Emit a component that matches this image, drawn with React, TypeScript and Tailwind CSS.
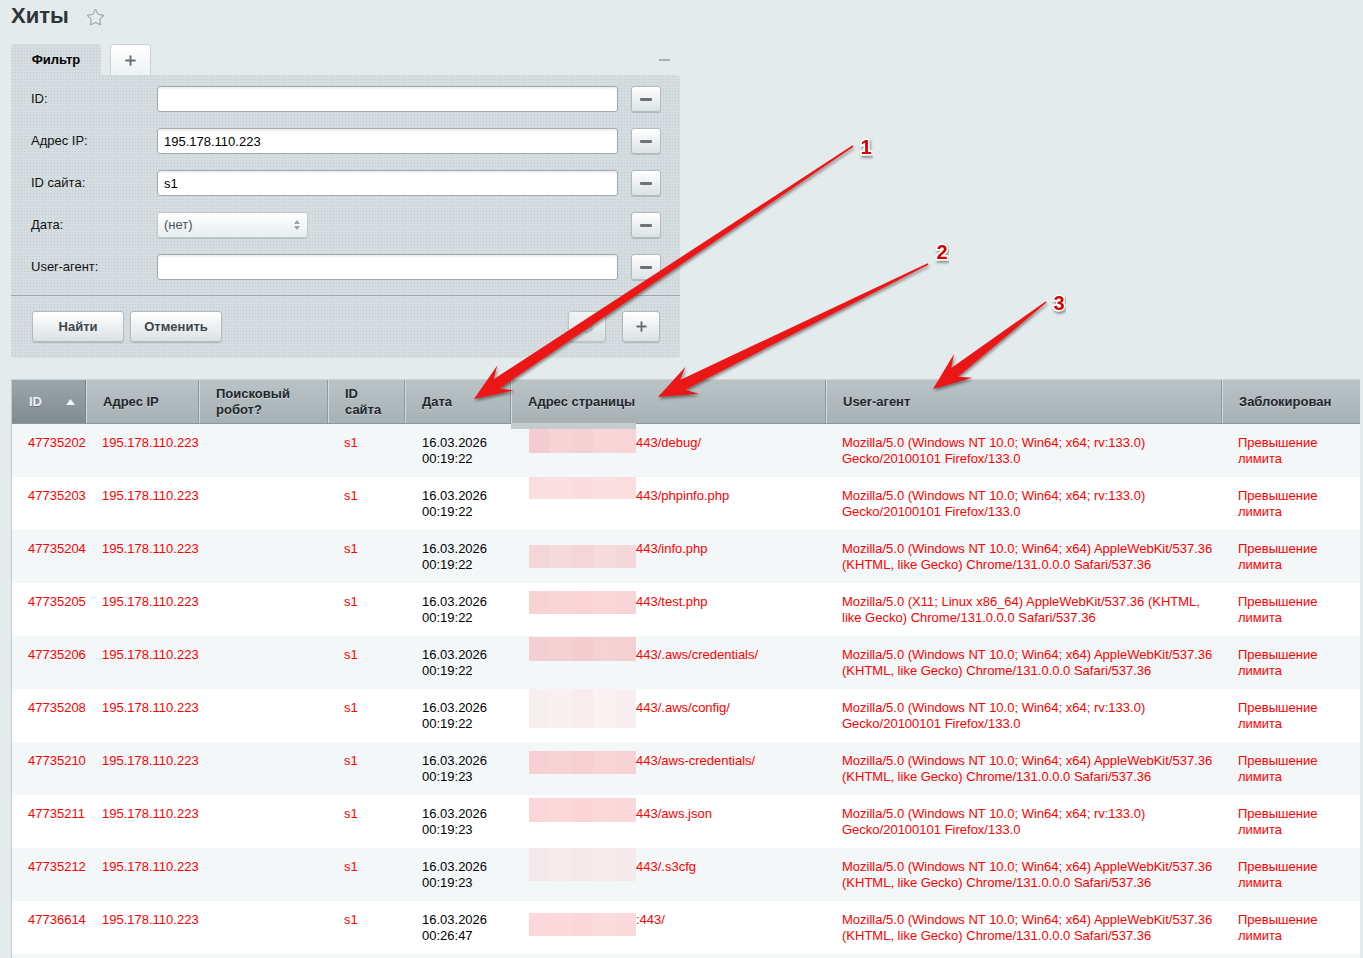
import React from 'react';
import { Star, Plus, Settings } from 'lucide-react';

const UA_FF = ['Mozilla/5.0 (Windows NT 10.0; Win64; x64; rv:133.0)', 'Gecko/20100101 Firefox/133.0'];
const UA_CHROME = ['Mozilla/5.0 (Windows NT 10.0; Win64; x64) AppleWebKit/537.36', '(KHTML, like Gecko) Chrome/131.0.0.0 Safari/537.36'];
const UA_X11 = ['Mozilla/5.0 (X11; Linux x86_64) AppleWebKit/537.36 (KHTML,', 'like Gecko) Chrome/131.0.0.0 Safari/537.36'];

interface Hit {
  id: string;
  page: string;
  agent: string[];
  time: string;
  // redaction block over the host part of the url
  maskTop: number;
  maskH: number;
  shades: string[];
}

const hits: Hit[] = [
  { id: '47735202', page: '443/debug/', agent: UA_FF, time: '00:19:22', maskTop: 5, maskH: 24, shades: ['#f5cdd0', '#f7d3d5', '#f6d1d3', '#f8d6d8', '#f7d4d6'] },
  { id: '47735203', page: '443/phpinfo.php', agent: UA_FF, time: '00:19:22', maskTop: 0, maskH: 22, shades: ['#fbdfe0', '#fcdfe1', '#fbdcde', '#fcdfe0', '#fcdedf'] },
  { id: '47735204', page: '443/info.php', agent: UA_CHROME, time: '00:19:22', maskTop: 15, maskH: 23, shades: ['#f5d6d8', '#f6d9da', '#f5d5d7', '#f7dadc', '#f6d7d9'] },
  { id: '47735205', page: '443/test.php', agent: UA_X11, time: '00:19:22', maskTop: 8, maskH: 23, shades: ['#f9d2d4', '#fad5d7', '#f9d3d5', '#fad6d8', '#f9d4d6'] },
  { id: '47735206', page: '443/.aws/credentials/', agent: UA_CHROME, time: '00:19:22', maskTop: 1, maskH: 24, shades: ['#f4cfd1', '#f5d1d3', '#f3cdd0', '#f5d2d4', '#f4d0d2'] },
  { id: '47735208', page: '443/.aws/config/', agent: UA_FF, time: '00:19:22', maskTop: 0, maskH: 39, shades: ['#f8eeef', '#f9f0f1', '#f8ecee', '#faf1f2', '#f9eeef'] },
  { id: '47735210', page: '443/aws-credentials/', agent: UA_CHROME, time: '00:19:23', maskTop: 9, maskH: 23, shades: ['#f6d0d2', '#f7d3d5', '#f6cfd2', '#f8d4d6', '#f7d2d4'] },
  { id: '47735211', page: '443/aws.json', agent: UA_FF, time: '00:19:23', maskTop: 3, maskH: 24, shades: ['#fad6d8', '#fbd8da', '#fad4d6', '#fbd9db', '#fad7d9'] },
  { id: '47735212', page: '443/.s3cfg', agent: UA_CHROME, time: '00:19:23', maskTop: 0, maskH: 33, shades: ['#f4e9ea', '#f5ebec', '#f4e8e9', '#f6ecec', '#f5eaeb'] },
  { id: '47736614', page: ':443/', agent: UA_CHROME, time: '00:26:47', maskTop: 12, maskH: 23, shades: ['#fcd8da', '#fcdadc', '#fbd7d9', '#fcdbdc', '#fcd9db'] },
];

const cols = 'grid grid-cols-[74px_113px_129px_77px_106px_315px_396px_138px]';

const dots =
  'bg-[#d5dde0] bg-[radial-gradient(circle,#c0cacd_0.8px,transparent_1px)] bg-[length:3px_3px]';

const headCell =
  'flex items-center pl-[17px] pr-2 text-[13px] leading-[16px] font-bold text-[#1e282c] border-r border-[#8f9a9e] shadow-[inset_1px_0_0_#d2d9db] bg-linear-to-b from-[#bac4c7] to-[#a7b1b4] [text-shadow:0_1px_0_rgba(255,255,255,0.4)]';

const btn =
  'rounded-[3px] border border-[#b3bbbe] bg-linear-to-b from-white to-[#dce2e4] shadow-[0_1px_1px_rgba(0,0,0,0.15)]';

function arrowPoints(tx: number, ty: number, px: number, py: number) {
  const dx = px - tx;
  const dy = py - ty;
  const len = Math.hypot(dx, dy);
  const ux = dx / len;
  const uy = dy / len;
  const nx = -uy;
  const ny = ux;
  const head = 38;
  const barb = 15;
  const neck = 5.5;
  const tail = 0.8;
  const bx = px - ux * head;
  const by = py - uy * head;
  const jx = px - ux * head * 0.72;
  const jy = py - uy * head * 0.72;
  const pts = [
    [tx + nx * tail, ty + ny * tail],
    [jx + nx * neck, jy + ny * neck],
    [bx + nx * barb, by + ny * barb],
    [px, py],
    [bx - nx * barb, by - ny * barb],
    [jx - nx * neck, jy - ny * neck],
    [tx - nx * tail, ty - ny * tail],
  ];
  return pts.map((p) => `${p[0].toFixed(1)},${p[1].toFixed(1)}`).join(' ');
}

const arrows = [
  { t: [853, 146], p: [474, 399], label: '1', lx: 866, ly: 154 },
  { t: [928, 264], p: [658, 397], label: '2', lx: 942, ly: 259 },
  { t: [1046, 302], p: [933, 389], label: '3', lx: 1059, ly: 310 },
];

const MinusButton: React.FC = () => (
  <div className={`ml-[13px] w-[30px] h-[26px] flex items-center justify-center ${btn}`}>
    <div className="w-[12px] h-[3px] rounded-[1px] bg-[#6b7579]" />
  </div>
);

const FilterInput: React.FC<{ value?: string }> = ({ value = '' }) => (
  <input
    readOnly
    value={value}
    className="w-[461px] h-[26px] rounded-[3px] border border-[#a4acaf] bg-white px-[6px] text-[13px] text-black shadow-[inset_0_2px_2px_rgba(0,0,0,0.07)] outline-none"
  />
);

const Row: React.FC<{ label: string; children: React.ReactNode }> = ({ label, children }) => (
  <div className="flex items-center h-[26px]">
    <div className="w-[146px] pl-[20px] text-[13px] text-[#111]">{label}</div>
    {children}
  </div>
);

const App: React.FC = () => {
  return (
    <div className="relative min-h-screen bg-[#e4ebed] font-['Liberation_Sans',Arial,sans-serif] overflow-hidden">
      <div className="pl-[11px] pb-4">
        <div className="flex items-center mt-[2px] h-[28px]">
          <h1 className="text-[22px] leading-[28px] font-bold text-[#2d3538]">Хиты</h1>
          <Star className="ml-[17px] mt-[2px]" size={19} strokeWidth={1.6} color="#a4adb1" />
        </div>

        <div className="w-[669px] mt-[14px]">
          <div className="flex h-[31px]">
            <div className={`w-[90px] h-full rounded-t-[4px] flex items-center justify-center text-[13px] font-bold text-black ${dots}`}>
              Фильтр
            </div>
            <div className="ml-[9px] w-[41px] h-full rounded-t-[4px] border border-b-0 border-[#cbd3d6] bg-linear-to-b from-white to-[#eef2f3] flex items-center justify-center">
              <Plus size={15} strokeWidth={3} color="#666f73" />
            </div>
            <div className="ml-auto mr-[10px] mt-[15px] w-[11px] h-[2px] bg-[#a9b2b5]" />
          </div>

          <div className={`rounded-b-[4px] rounded-tr-[4px] ${dots}`}>
            <div className="flex flex-col gap-[16px] pt-[11px]">
              <Row label="ID:">
                <FilterInput />
                <MinusButton />
              </Row>
              <Row label="Адрес IP:">
                <FilterInput value="195.178.110.223" />
                <MinusButton />
              </Row>
              <Row label="ID сайта:">
                <FilterInput value="s1" />
                <MinusButton />
              </Row>
              <Row label="Дата:">
                <div className="w-[151px] h-[26px] rounded-[3px] border border-[#c3cbce] bg-linear-to-b from-white to-[#e8edef] shadow-[0_1px_1px_rgba(0,0,0,0.12)] flex items-center pl-[6px] pr-[7px] text-[13px] text-[#4b5458]">
                  <span>(нет)</span>
                  <svg className="ml-auto" width="6" height="10" viewBox="0 0 6 10">
                    <path d="M3 0 L6 4 L0 4 Z" fill="#9aa3a7" />
                    <path d="M0 6 L6 6 L3 10 Z" fill="#9aa3a7" />
                  </svg>
                </div>
                <div className="w-[310px]" />
                <MinusButton />
              </Row>
              <Row label="User-агент:">
                <FilterInput />
                <MinusButton />
              </Row>
            </div>

            <div className="mt-[15px] h-px bg-[#9ea9ad]" />

            <div className="flex items-center pt-[15px] pb-[16px] pl-[21px] pr-[20px]">
              <div className={`w-[92px] h-[31px] flex items-center justify-center text-[13px] font-bold text-[#3c474c] ${btn}`}>Найти</div>
              <div className={`ml-[6px] w-[92px] h-[31px] flex items-center justify-center text-[13px] font-bold text-[#3c474c] ${btn}`}>Отменить</div>
              <div className={`ml-auto w-[38px] h-[31px] flex items-center justify-center opacity-70 ${btn}`}>
                <Settings size={14} strokeWidth={2.5} color="#b3bbbf" />
              </div>
              <div className={`ml-[16px] w-[38px] h-[31px] flex items-center justify-center ${btn}`}>
                <Plus size={15} strokeWidth={3} color="#666f73" />
              </div>
            </div>
          </div>
        </div>

        <div className="mt-[21px] w-[1349px] border-l border-[#c3cbce]">
          <div className={`${cols} h-[45px] border-t border-[#cbd2d5] border-b border-b-[#8d989c]`}>
            <div className="flex items-center pl-[17px] pr-[10px] text-[13px] font-bold text-[#eef2f3] border-r border-[#7a868a] bg-linear-to-b from-[#9aa6aa] to-[#808c90] [text-shadow:0_1px_0_rgba(0,0,0,0.25)]">
              <span>ID</span>
              <svg className="ml-auto" width="9" height="6" viewBox="0 0 9 6">
                <path d="M4.5 0 L9 6 L0 6 Z" fill="#f2f5f6" />
              </svg>
            </div>
            <div className={headCell}>Адрес IP</div>
            <div className={headCell}>
              Поисковый
              <br />
              робот?
            </div>
            <div className={headCell}>
              ID
              <br />
              сайта
            </div>
            <div className={headCell}>Дата</div>
            <div className={headCell}>Адрес страницы</div>
            <div className={headCell}>User-агент</div>
            <div className={`${headCell} border-r-0`}>Заблокирован</div>
          </div>

          {hits.map((h, i) => (
            <div
              key={h.id}
              className={`${cols} h-[53px] text-[13px] leading-[16px] text-[#f00] ${i % 2 === 0 ? 'bg-[#f4f7f8]' : 'bg-white'}`}
            >
              <div className="pl-[16px] pt-[11px]">{h.id}</div>
              <div className="pl-[16px] pt-[11px]">195.178.110.223</div>
              <div />
              <div className="pl-[16px] pt-[11px]">s1</div>
              <div className="pl-[17px] pt-[11px] text-black">
                16.03.2026
                <br />
                {h.time}
              </div>
              <div className="relative pl-[125px] pt-[11px] whitespace-nowrap">
                {h.page}
                {i === 0 && <div className="absolute left-0 -top-px w-[125px] h-[6px] bg-[#c4ccce]" />}
                <div
                  className="absolute left-[18px] w-[107px] flex"
                  style={{ top: h.maskTop, height: h.maskH }}
                >
                  {h.shades.map((c, k) => (
                    <div key={k} className="flex-1 h-full" style={{ background: c }} />
                  ))}
                </div>
              </div>
              <div className="pl-[16px] pt-[11px] whitespace-nowrap">
                {h.agent[0]}
                <br />
                {h.agent[1]}
              </div>
              <div className="pl-[16px] pt-[11px]">
                Превышение
                <br />
                лимита
              </div>
            </div>
          ))}
          <div className={`${cols} h-[53px] bg-[#f4f7f8]`} />
        </div>
      </div>

      <svg className="absolute left-0 top-0 pointer-events-none" width="1363" height="958" viewBox="0 0 1363 958">
        <defs>
          <filter id="arrowShade" x="-10%" y="-10%" width="120%" height="120%">
            <feDropShadow dx="1" dy="2" stdDeviation="1.4" floodColor="#000" floodOpacity="0.45" />
          </filter>
          <linearGradient id="arrowFill" x1="0" y1="0" x2="1" y2="1">
            <stop offset="0" stopColor="#ff2a2a" />
            <stop offset="1" stopColor="#d80000" />
          </linearGradient>
        </defs>
        {arrows.map((a) => (
          <g key={a.label}>
            <polygon
              points={arrowPoints(a.t[0], a.t[1], a.p[0], a.p[1])}
              fill="url(#arrowFill)"
              filter="url(#arrowShade)"
            />
            <text
              x={a.lx}
              y={a.ly}
              textAnchor="middle"
              fontFamily="'Liberation Sans', Arial, sans-serif"
              fontWeight="bold"
              fontSize="20"
              fill="#d60000"
              stroke="#ffffff"
              strokeWidth="3"
              paintOrder="stroke"
              filter="url(#arrowShade)"
            >
              {a.label}
            </text>
          </g>
        ))}
      </svg>
    </div>
  );
};

export default App;
